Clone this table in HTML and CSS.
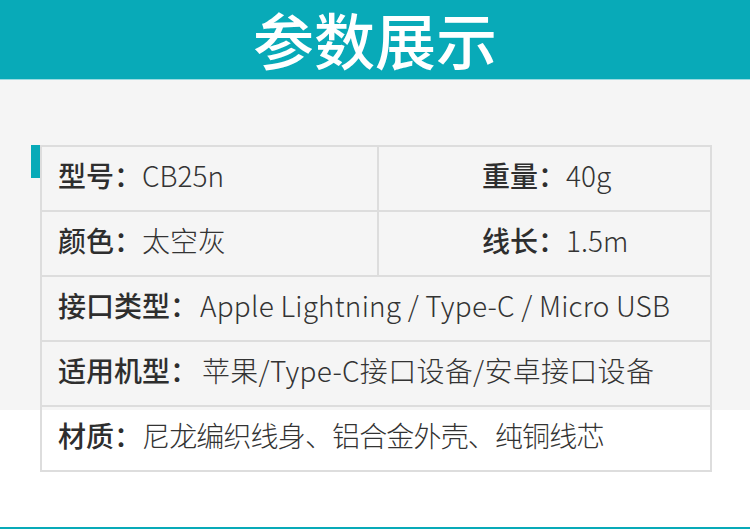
FILE: index.html
```html
<!DOCTYPE html>
<html lang="zh-CN">
<head>
<meta charset="utf-8">
<title>参数展示</title>
<link rel="stylesheet" href="styles.css">
</head>
<body>
<header class="banner"><h1 class="banner-title">参数展示</h1></header>
<main class="content">
  <div class="spec">
    <span class="spec-accent"></span>
    <div class="spec-row">
      <div class="spec-cell spec-cell-half"><span class="spec-label">型号：</span><span class="spec-value">CB25n</span></div>
      <div class="spec-cell spec-cell-right"><span class="spec-label">重量：</span><span class="spec-value">40g</span></div>
    </div>
    <div class="spec-row">
      <div class="spec-cell spec-cell-half"><span class="spec-label">颜色：</span><span class="spec-value">太空灰</span></div>
      <div class="spec-cell spec-cell-right"><span class="spec-label">线长：</span><span class="spec-value">1.5m</span></div>
    </div>
    <div class="spec-row">
      <div class="spec-cell"><span class="spec-label">接口类型：</span><span class="spec-value spec-value-wide">Apple Lightning / Type-C / Micro USB</span></div>
    </div>
    <div class="spec-row">
      <div class="spec-cell"><span class="spec-label">适用机型：</span><span class="spec-value spec-value-gap">苹果/Type-C接口设备/安卓接口设备</span></div>
    </div>
    <div class="spec-row">
      <div class="spec-cell"><span class="spec-label">材质：</span><span class="spec-value spec-value-narrow">尼龙编织线身、铝合金外壳、纯铜线芯</span></div>
    </div>
  </div>
</main>
<footer class="bottom-line"></footer>
</body>
</html>
```
FILE: styles.css
```css
* { box-sizing: border-box; }
html, body {
  margin: 0;
  padding: 0;
}
body {
  width: 750px;
  height: 529px;
  overflow: hidden;
  background: #ffffff;
  font-family: "Noto Sans CJK SC", "Noto Sans", sans-serif;
  color: #333;
}
.banner {
  height: 80px;
  background: #08aab8;
  border-bottom: 1px solid #9adbe1;
  display: flex;
  align-items: center;
  justify-content: center;
}
.banner-title {
  margin: 0;
  font-size: 61px;
  font-weight: 500;
  color: #ffffff;
  line-height: 1.28;
}
.content {
  height: 447px;
  background: linear-gradient(#f5f5f5 0, #f5f5f5 330px, #ffffff 330px);
  padding-top: 65px;
  padding-left: 40px;
}
.spec {
  position: relative;
  width: 672px;
  border: 2px solid #dddddd;
  border-bottom: none;
}
.spec-accent {
  position: absolute;
  left: -11px;
  top: -2px;
  width: 9px;
  height: 33px;
  background: #08aab8;
}
.spec-row {
  display: flex;
  height: 65px;
  border-bottom: 2px solid #dddddd;
}
.spec-cell {
  flex: 1;
  display: flex;
  align-items: center;
  padding-left: 16px;
  padding-bottom: 8px;
  font-size: 28px;
  white-space: nowrap;
}
.spec-cell-half {
  flex: 0 0 337px;
  border-right: 2px solid #dddddd;
}
.spec-cell-right {
  padding-left: 103px;
}
.spec-label {
  font-weight: 500;
  color: #2e2e2e;
}
.spec-value {
  font-weight: 300;
  color: #333333;
}
.spec-value-wide {
  margin-left: 2px;
  letter-spacing: 0.22px;
}
.spec-value-gap {
  margin-left: 4px;
  letter-spacing: 0.3px;
}
.spec-value-narrow {
  letter-spacing: -0.85px;
}
.bottom-line {
  height: 2px;
  background: #08aab8;
}
```
